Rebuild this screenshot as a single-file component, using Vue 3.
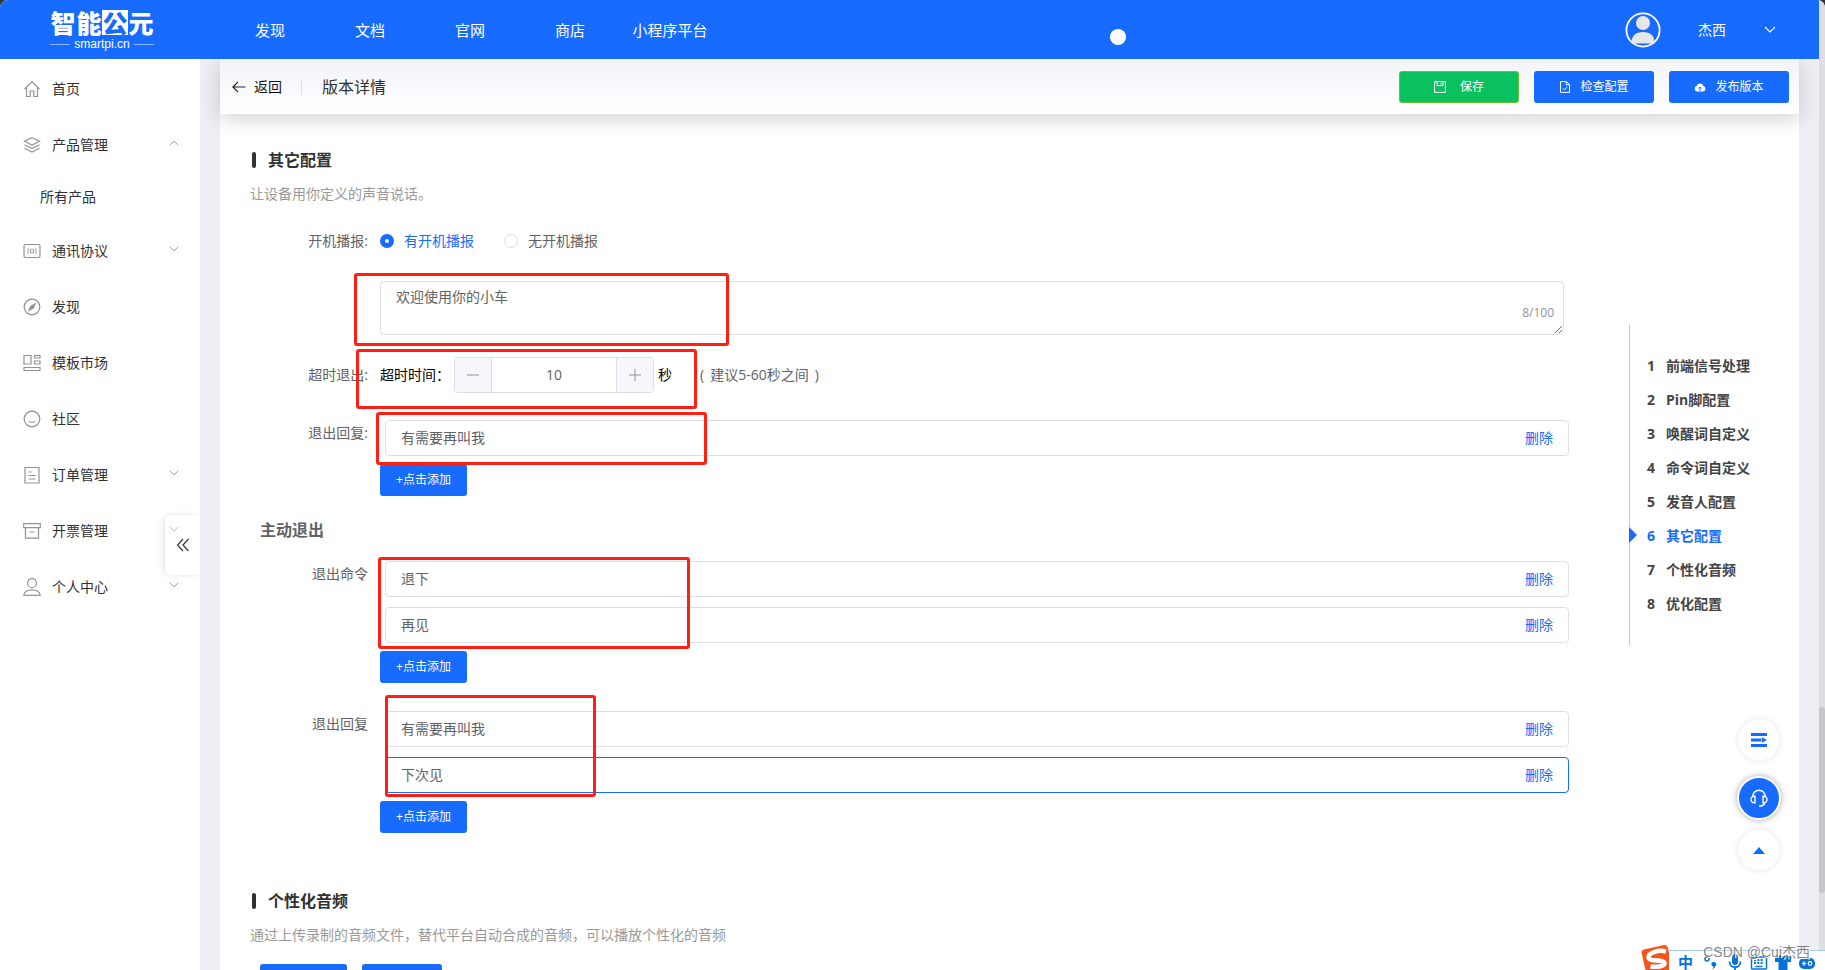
<script setup>
import { ref } from 'vue'

const topLinks = ['发现', '文档', '官网', '商店', '小程序平台']

const menu = [
  { label: '首页', icon: 'home' },
  { label: '产品管理', icon: 'layers', arrow: 'up', children: ['所有产品'] },
  { label: '通讯协议', icon: 'protocol', arrow: 'down' },
  { label: '发现', icon: 'compass' },
  { label: '模板市场', icon: 'template' },
  { label: '社区', icon: 'smile' },
  { label: '订单管理', icon: 'order' , arrow: 'down' },
  { label: '开票管理', icon: 'invoice', arrow: 'down' },
  { label: '个人中心', icon: 'user', arrow: 'down' },
]

const steps = ['前端信号处理', 'Pin脚配置', '唤醒词自定义', '命令词自定义', '发音人配置', '其它配置', '个性化音频', '优化配置']
const activeStep = 5

const boot = ref('on')
const welcome = ref('欢迎使用你的小车')
const timeout = ref(10)

const timeoutReplies = ref(['有需要再叫我'])
const exitGroups = ref([
  { id: 'cmd', label: '退出命令', items: ['退下', '再见'], focused: -1 },
  { id: 'reply', label: '退出回复', items: ['有需要再叫我', '下次见'], focused: 1 },
])
</script>

<template>
  <div class="app">
    <div class="page">
      <header class="topbar">
        <a href="#" class="logo">
          <span class="logo-name"><span>智</span><span>能</span><span class="logo-box">公</span><span>元</span></span>
          <span class="logo-domain">smartpi.cn</span>
        </a>
        <nav class="topnav">
          <a v-for="link in topLinks" :key="link" href="#">{{ link }}</a>
        </nav>
        <span class="dot"></span>
        <div class="account">
          <svg class="avatar" viewBox="0 0 36 36" aria-hidden="true">
            <circle cx="18" cy="18" r="16.6" fill="none" stroke="#fff" stroke-width="1.8" />
            <circle cx="18" cy="11" r="7" fill="#e6e6e6" />
            <path d="M6.500 31.500c0-8 4-11.500 11.500-11.500s11.500 3.500 11.500 11.500z" fill="#e6e6e6" />
          </svg>
          <span class="account-name">杰西</span>
          <svg class="account-arrow" viewBox="0 0 12 8" aria-hidden="true"><path d="M1 1l5 5 5-5" fill="none" stroke="#fff" stroke-width="1.2" /></svg>
        </div>
      </header>

      <div class="body">
        <aside class="sidebar">
          <template v-for="item in menu" :key="item.label">
            <a href="#" class="menu-item">
              <svg class="menu-icon" viewBox="0 0 18 18" aria-hidden="true">
                <path v-if="item.icon === 'home'" d="M1.500 9L9 1.800 16.500 9M3.500 7.500v9h3.700v-5.500h3.600v5.500h3.700v-9" />
                <path v-else-if="item.icon === 'layers'" d="M9 1.700l7.500 3.600L9 9 1.500 5.300zM1.500 8.800L9 12.500l7.500-3.700M1.500 12.300L9 16l7.500-3.700" />
                <g v-else-if="item.icon === 'protocol'">
                  <rect x="1" y="2.500" width="16" height="13" rx="1.500" />
                  <path d="M5 6v6M13 6v6M9 6.500v2M9 10v2M7.500 7v4M10.500 7v4" stroke-width=".9" />
                </g>
                <g v-else-if="item.icon === 'compass'">
                  <circle cx="9" cy="9" r="7.800" />
                  <path d="M13 5l-2.500 5.500L5 13l2.800-5.300z" fill="#909399" stroke-width=".5" />
                </g>
                <path v-else-if="item.icon === 'template'" d="M1 1.500h7v8.500H1zM11.500 1.500h5.500v2.500h-5.500zM11.500 7h5.500v3h-5.500zM1 13.500h16v3H1z" />
                <g v-else-if="item.icon === 'smile'">
                  <circle cx="9" cy="9" r="7.800" />
                  <path d="M6 11c1.500 2 4.500 2 6 0" />
                </g>
                <path v-else-if="item.icon === 'order'" d="M2 1.500h14v15.500H2zM5.500 6h3M5.500 9.500h7M5.500 13h7" />
                <path v-else-if="item.icon === 'invoice'" d="M.7 1.700h16.600v4H.7zM2.500 5.700v10.500h13V5.700M6.500 10h5" />
                <g v-else>
                  <circle cx="9" cy="5.200" r="4.500" />
                  <path d="M.8 17.300c.5-4 3-5.500 8.200-5.500s7.700 1.500 8.200 5.500z" />
                </g>
              </svg>
              <span class="menu-label">{{ item.label }}</span>
              <svg v-if="item.arrow" class="menu-arrow" viewBox="0 0 10 6" aria-hidden="true">
                <path :d="item.arrow === 'up' ? 'M.7 5.300L5 1l4.300 4.300' : 'M.7 .7L5 5 9.300 .7'" />
              </svg>
            </a>
            <a v-for="child in item.children" :key="child" href="#" class="menu-child">{{ child }}</a>
          </template>
          <button class="collapse" type="button" aria-label="收起">
            <svg viewBox="0 0 14 14" aria-hidden="true"><path d="M7 1L1.500 7 7 13M12.500 1L7 7l5.500 6" fill="none" stroke="#333" stroke-width="1.200" /></svg>
          </button>
        </aside>

        <main class="main">
          <div class="subbar">
            <a href="#" class="back">
              <svg viewBox="0 0 14 12" aria-hidden="true"><path d="M6 .8L.9 6 6 11.200M1 6h12.500" fill="none" stroke="#222" stroke-width="1.200" /></svg>
              返回
            </a>
            <h1 class="title">版本详情</h1>
            <div class="actions">
              <button type="button" class="btn save">
                <svg viewBox="0 0 12 12" aria-hidden="true"><path d="M.6.6h10.800v10.800H.6zM3 .6v4h6v-4M7 2v1.500" fill="none" stroke="#fff" /></svg>
                保存
              </button>
              <button type="button" class="btn">
                <svg viewBox="0 0 12 12" aria-hidden="true"><path d="M1.500.6h6l3 3v7.800h-9zM7.300.6v3.200h3.200M4 7.300l1.500 1.500L8.200 6" fill="none" stroke="#fff" /></svg>
                检查配置
              </button>
              <button type="button" class="btn">
                <svg viewBox="0 0 12 12" aria-hidden="true"><path d="M3.200 10.500a2.800 2.800 0 0 1-.5-5.500 3.500 3.500 0 0 1 6.700 0 2.800 2.800 0 0 1-.5 5.500z" fill="#fff" /><path d="M6 10V6M4.500 7.500L6 6l1.500 1.500" fill="none" stroke="#186bff" /></svg>
                发布版本
              </button>
            </div>
          </div>

          <div class="content">
            <form class="form" @submit.prevent>
              <h2 class="section-title">其它配置</h2>
              <p class="section-desc">让设备用你定义的声音说话。</p>

              <div class="row row-boot">
                <span class="label">开机播报:</span>
                <div class="field radios">
                  <label class="radio"><input v-model="boot" type="radio" name="boot" value="on" /><span>有开机播报</span></label>
                  <label class="radio"><input v-model="boot" type="radio" name="boot" value="off" /><span>无开机播报</span></label>
                </div>
              </div>

              <div class="row row-welcome">
                <span class="label"></span>
                <div class="field textarea-wrap">
                  <textarea v-model="welcome" maxlength="100" aria-label="开机播报内容"></textarea>
                  <span class="count">{{ welcome.length }}/100</span>
                </div>
              </div>

              <div class="row row-timeout">
                <span class="label">超时退出:</span>
                <div class="field timeout">
                  <label for="timeout">超时时间：</label>
                  <div class="stepper">
                    <button type="button" aria-label="减少" @click="timeout--"><svg viewBox="0 0 12 12"><path d="M0 6h12" /></svg></button>
                    <input id="timeout" v-model="timeout" type="text" />
                    <button type="button" aria-label="增加" @click="timeout++"><svg viewBox="0 0 12 12"><path d="M0 6h12M6 0v12" /></svg></button>
                  </div>
                  <span class="unit">秒</span>
                  <span class="hint"><span>(</span><span>建议5-60秒之间</span><span>)</span></span>
                </div>
              </div>

              <div class="row row-list">
                <span class="label">退出回复:</span>
                <div class="field list">
                  <div v-for="(text, i) in timeoutReplies" :key="i" class="entry">
                    <input v-model="timeoutReplies[i]" type="text" aria-label="退出回复" />
                    <button type="button" class="remove">删除</button>
                  </div>
                  <button type="button" class="btn add">+点击添加</button>
                </div>
              </div>

              <h3 class="sub-title">主动退出</h3>

              <div v-for="group in exitGroups" :key="group.id" class="row row-list">
                <span class="label">{{ group.label }}</span>
                <div class="field list">
                  <div v-for="(text, i) in group.items" :key="i" class="entry" :class="{ focused: i === group.focused }">
                    <input v-model="group.items[i]" type="text" :aria-label="group.label" />
                    <button type="button" class="remove">删除</button>
                  </div>
                  <button type="button" class="btn add">+点击添加</button>
                </div>
              </div>

              <h2 class="section-title audio-title">个性化音频</h2>
              <p class="section-desc">通过上传录制的音频文件，替代平台自动合成的音频，可以播放个性化的音频</p>
              <div class="audio-actions">
                <button type="button" class="btn add" aria-label="添加音频"></button>
                <button type="button" class="btn add" aria-label="上传音频"></button>
              </div>
            </form>

            <nav class="toc">
              <a v-for="(step, i) in steps" :key="step" href="#" :class="{ active: i === activeStep }">
                <span class="num">{{ i + 1 }}</span>{{ step }}
              </a>
            </nav>
          </div>
        </main>
      </div>

      <div class="floats">
        <button type="button" class="float" aria-label="目录">
          <svg viewBox="0 0 16 14"><path d="M0 1.500h16M0 7h10.500M0 12.500h16" stroke="#186bff" stroke-width="3" /><path d="M11 4.200L16 7l-5 2.800z" fill="#186bff" /></svg>
        </button>
        <button type="button" class="float service" aria-label="客服">
          <svg viewBox="0 0 18 18" fill="none" stroke="#fff" stroke-width="1.400"><path d="M2.800 7.500a6.200 6.200 0 0 1 12.400 0M15 13.500c-.5 2.500-2.500 3.600-6 3.600M5 7.200v6.600C2.500 14 1 12.700 1 10.500S2.500 7 5 7.200zM13 7.200v6.600c2.500.2 4-1.100 4-3.300S15.500 7 13 7.200z" /></svg>
        </button>
        <button type="button" class="float" aria-label="返回顶部">
          <svg class="up" viewBox="0 0 12 7"><path d="M0 7l6-7 6 7z" fill="#186bff" /></svg>
        </button>
      </div>
    </div>

    <div class="scrollbar"><div class="thumb"></div></div>

    <div class="mark mark-welcome"></div>
    <div class="mark mark-timeout"></div>
    <div class="mark mark-reply"></div>
    <div class="mark mark-command"></div>
    <div class="mark mark-exit"></div>

    <div class="ime">
      <svg class="ime-logo" viewBox="0 0 32 26" aria-hidden="true">
        <path d="M3 5.500L23 1q3-.6 3.800 2.400L32 26H4.500L.6 9Q0 6.200 3 5.500z" fill="#f1561f" />
        <path d="M25 7.500C17 5.500 7 9 7.500 13.500c.6 4.500 15 1.500 16 5.500.5 3-7 4.500-14 3.500" fill="none" stroke="#fff" stroke-width="4.500" />
      </svg>
      <div class="ime-bar">
        <span class="ime-mode">中</span>
        <svg viewBox="0 0 18 18"><circle cx="5" cy="5" r="2" fill="none" stroke="#0672d8" stroke-width="1.500" /><path d="M9.500 9.500a2.400 2.400 0 1 1 4 2.500q-.7 2.500-3.500 3.500 1.500-1.500 1.500-2.800a2.300 2.300 0 0 1-2-3.200z" fill="#0672d8" /></svg>
        <svg viewBox="0 0 18 18"><rect x="6" y="0" width="6" height="11" rx="3" fill="#0672d8" /><path d="M3.500 7.500c0 7.500 11 7.500 11 0M9 13v4" fill="none" stroke="#0672d8" stroke-width="1.800" /></svg>
        <svg viewBox="0 0 18 18"><rect x="1.500" y="3" width="15" height="12" rx="1" fill="#fff" stroke="#0672d8" stroke-width="1.500" /><path d="M4 6h10M4 9h10" stroke="#0672d8" stroke-width="2" stroke-dasharray="2 1.300" /><path d="M5.500 12.500h7" stroke="#0672d8" stroke-width="1.500" /></svg>
        <svg viewBox="0 0 18 18"><path d="M1 3l5-2c1 2 5 2 6 0l5 2v5h-3.500v10h-9V8H1z" fill="#0672d8" /></svg>
        <svg viewBox="0 0 18 18"><rect x="1" y="4" width="16" height="11" rx="5" fill="#0672d8" /><path d="M4 9.500h4M6 7.500v4" stroke="#fff" stroke-width="1.300" /><circle cx="12" cy="9.500" r="1.800" fill="none" stroke="#fff" stroke-width="1.200" /></svg>
      </div>
    </div>
    <div class="watermark">CSDN @Cui杰西</div>
  </div>
</template>

<style>
html,
body {
  background: #333;
  overflow: hidden;
}
</style>

<style scoped>
.app {
  position: relative;
  display: flex;
  height: 100vh;
  overflow: hidden;
  border-radius: 8px 8px 0 0;
  font-family: "Open Sans", "Noto Sans CJK SC", sans-serif;
  font-size: 14px;
  line-height: 20px;
  color: #303133;
  background: #eeeff5;
}
.app * { box-sizing: border-box; }
a { color: inherit; text-decoration: none; }
button, input, textarea { font: inherit; color: inherit; outline: none; }
button { padding: 0; border: 0; background: none; cursor: pointer; }
h1, h2, h3, p { margin: 0; }

.page { position: relative; flex: 1; min-width: 0; display: flex; flex-direction: column; }
.scrollbar { width: 6px; background: #dddee3; padding-top: 707px; }
.thumb { height: 186px; border-radius: 3px; background: #c5c6ca; }

.topbar {
  position: relative;
  z-index: 2;
  flex: none;
  display: flex;
  align-items: center;
  height: 59px;
  background: #186bff;
  color: #fff;
}
.logo { width: 104px; margin-left: 50px; padding-top: 2px; display: flex; flex-direction: column; gap: 2px; }
.logo-name { display: flex; font-family: "Noto Sans CJK SC", sans-serif; font-size: 25px; line-height: 25px; font-weight: 900; }
.logo-name span { width: 26px; height: 25px; text-align: center; }
.logo-box { background: #fff; color: #186bff; }
.logo-domain { display: flex; align-items: center; gap: 4px; font-family: "Liberation Sans", sans-serif; font-size: 12px; line-height: 14px; }
.logo-domain::before, .logo-domain::after { content: ""; flex: 1; height: 1px; background: #8bb5ff; }
.topnav { display: flex; margin-left: 66px; font-size: 15px; }
.topnav a { min-width: 100px; padding: 0 15px; text-align: center; line-height: 60px; }
.topnav a:last-child { padding: 0 12px; }
.dot { position: absolute; left: 1110px; top: 29px; width: 16px; height: 16px; border-radius: 50%; background: #fff; }
.account { margin-left: auto; display: flex; align-items: center; padding-right: 43px; line-height: 22px; }
.avatar { width: 36px; height: 36px; }
.account-name { margin-left: 37px; }
.account-arrow { width: 12px; height: 8px; margin-left: 38px; }

.body { flex: 1; min-height: 0; display: flex; }
.sidebar { position: relative; z-index: 1; flex: none; width: 200px; background: #fff; padding-top: 2px; }
.menu-item { display: flex; align-items: center; height: 56px; padding: 0 21px 0 23px; }
.menu-icon { width: 18px; height: 18px; margin-right: 11px; fill: none; stroke: #909399; stroke-width: 1.2; }
.menu-label { flex: 1; }
.menu-arrow { width: 10px; height: 6px; margin-bottom: 4px; fill: none; stroke: #a0a3a9; }
.menu-child { display: block; height: 50px; line-height: 48px; padding-left: 40px; }
.collapse {
  position: absolute;
  right: 0;
  top: 456px;
  display: flex;
  align-items: center;
  justify-content: center;
  width: 35px;
  height: 60px;
  border-radius: 6px 0 0 6px;
  background: rgba(255, 255, 255, 0.3);
  box-shadow: -2px 0 6px rgba(0, 0, 0, 0.1);
  clip-path: inset(-8px 0 -8px -8px);
}
.collapse svg { width: 14px; height: 14px; }

.main { flex: 1; min-width: 0; margin: 0 20px; display: flex; flex-direction: column; background: #fff; }
.subbar {
  flex: none;
  position: relative;
  display: flex;
  align-items: center;
  height: 55px;
  padding: 0 10px 0 12px;
  background: linear-gradient(#f2f4f8, #fff);
  box-shadow: 0 5px 20px rgba(0, 0, 0, 0.18);
}
.back { display: flex; align-items: center; gap: 8px; padding-right: 19px; color: #111; }
.back svg { width: 14px; height: 12px; }
.title { height: 16px; padding-left: 20px; border-left: 1px solid #dcdfe6; font-size: 16px; line-height: 16px; font-weight: 400; }
.actions { margin-left: auto; display: flex; gap: 15px; }
.btn {
  display: flex;
  align-items: center;
  justify-content: center;
  gap: 9px;
  width: 120px;
  height: 32px;
  border-radius: 3px;
  background: #186bff;
  color: #fff;
  font-size: 12px;
  line-height: 16px;
}
.btn svg { width: 12px; height: 12px; }
.btn.save { gap: 14px; background: #0ac160; border: 1px solid #67c23a; }
.btn.add { width: 87px; }

.content { flex: 1; min-height: 0; display: flex; overflow: hidden; }
.form { flex: 1; min-width: 0; padding: 34px 60px 0 30px; }
.section-title { display: flex; align-items: center; gap: 12px; padding-left: 2px; font-size: 16px; line-height: 24px; font-weight: 700; }
.section-title::before { content: ""; width: 4px; height: 16px; border-radius: 2px; background: #303133; }
.section-desc { margin-top: 12px; color: #999; }

.row { display: flex; }
.label { flex: none; width: 118px; margin-right: 12px; text-align: right; color: #606266; line-height: 26px; }
.field { flex: 1; min-width: 0; }
.row-boot { margin-top: 24px; }
.radios { display: flex; gap: 30px; }
.radio { display: flex; align-items: center; gap: 10px; color: #606266; cursor: pointer; }
.radio:has(input:checked) { color: #186bff; }
.radio input { appearance: none; width: 14px; height: 14px; margin: 0; border: 1px solid #dcdfe6; border-radius: 50%; background: #fff; }
.radio input:checked { border: 5px solid #186bff; }

.row-welcome { margin-top: 27px; }
.textarea-wrap { position: relative; margin-right: 5px; }
textarea {
  display: block;
  width: 100%;
  height: 54px;
  padding: 5px 15px;
  border: 1px solid #dcdfe6;
  border-radius: 4px;
  background: #fff;
  color: #606266;
  resize: vertical;
}
.count { position: absolute; right: 10px; bottom: 12px; font-size: 12px; color: #909399; }

.row-timeout { margin-top: 22px; align-items: center; }
.timeout { display: flex; align-items: center; color: #000; }
.timeout label { width: 74px; white-space: nowrap; }
.stepper { display: flex; width: 200px; height: 36px; border: 1px solid #dcdfe6; border-radius: 4px; overflow: hidden; }
.stepper button { flex: none; width: 36px; background: #f5f7fa; }
.stepper svg { display: block; width: 12px; height: 12px; margin: 0 auto; stroke: #909399; }
.stepper input { flex: 1; min-width: 0; padding: 0; border: solid #dcdfe6; border-width: 0 1px; text-align: center; color: #606266; background: #fff; }
.unit { margin-left: 4px; }
.hint { display: flex; gap: 6px; margin-left: 28px; color: #606266; }

.row-list { margin-top: 27px; }
.row-list + .row-list { margin-top: 28px; }
.list { display: flex; flex-direction: column; }
.entry {
  display: flex;
  align-items: center;
  height: 36px;
  margin: 0 0 10px 5px;
  padding: 0 15px;
  border: 1px solid #dcdfe6;
  border-radius: 4px;
  color: #606266;
}
.entry:nth-last-child(2) { margin-bottom: 8px; }
.entry.focused { border-color: #186bff; }
.entry input { flex: 1; min-width: 0; padding: 0; border: 0; background: none; }
.remove { color: #186bff; }
.sub-title { margin-top: 22px; padding-left: 10px; font-size: 16px; line-height: 24px; color: #606266; }
.sub-title + .row-list { margin-top: 19px; }
.audio-title { margin-top: 56px; }
.audio-actions { display: flex; gap: 15px; margin-top: 19px; padding-left: 10px; }
.audio-actions .btn:last-child { width: 80px; }

.toc { flex: none; align-self: flex-start; width: 170px; height: 320px; margin-top: 211px; padding-top: 24px; border-left: 1px solid #c4c4c4; font-weight: 700; color: #444; }
.toc a { position: relative; display: flex; height: 34px; line-height: 34px; padding-left: 17px; white-space: nowrap; }
.num { width: 19px; }
.toc .active { color: #186bff; }
.toc .active::before { content: ""; position: absolute; left: -1px; top: 8px; border: solid transparent; border-width: 8px 0 8px 8px; border-left-color: #186bff; }

.floats { position: absolute; right: 38px; top: 719px; display: flex; flex-direction: column; align-items: center; gap: 15px; }
.float { display: flex; align-items: center; justify-content: center; width: 42px; height: 42px; border-radius: 50%; background: #fff; border: 1px solid #fafafa; box-shadow: 0 0 6px rgba(0, 0, 0, 0.1); }
.float svg { width: 16px; height: 14px; }
.float.service { width: 44px; height: 44px; border: 2px solid #fff; background: #186bff; box-shadow: 0 0 6px rgba(0, 0, 0, 0.35); }
.float.service svg { width: 18px; height: 18px; }
.float .up { width: 12px; height: 7px; }
.float.service + .float { margin-top: -6px; }

.mark { position: absolute; z-index: 3; border: 3px solid #ff2013; border-radius: 3px; pointer-events: none; }
.mark-welcome { left: 354px; top: 273px; width: 375px; height: 73px; }
.mark-timeout { left: 356px; top: 349px; width: 341px; height: 60px; }
.mark-reply { left: 376px; top: 412px; width: 331px; height: 53px; }
.mark-command { left: 378px; top: 557px; width: 312px; height: 92px; }
.mark-exit { left: 385px; top: 695px; width: 211px; height: 102px; }

.ime { position: absolute; z-index: 4; right: 0; bottom: 0; display: flex; align-items: flex-end; height: 26px; }
.ime-logo { width: 32px; height: 26px; margin-right: -4px; }
.ime-bar { display: flex; align-items: flex-start; gap: 6px; width: 156px; height: 20px; padding: 3px 0 0 9px; border-top: 1px solid #a9c9ea; background: #fff; color: #0672d8; overflow: hidden; }
.ime-mode { flex: none; width: 18px; font-family: "Noto Sans CJK SC", sans-serif; font-size: 15px; line-height: 15px; font-weight: 700; }
.ime-bar svg { flex: none; width: 18px; height: 18px; }
.watermark { position: absolute; z-index: 5; right: 15px; bottom: 8px; font-family: "Liberation Sans", "Noto Sans CJK SC", sans-serif; font-size: 14px; color: rgba(80, 80, 80, 0.7); text-shadow: 1px 1px 0 #fff; }
</style>
